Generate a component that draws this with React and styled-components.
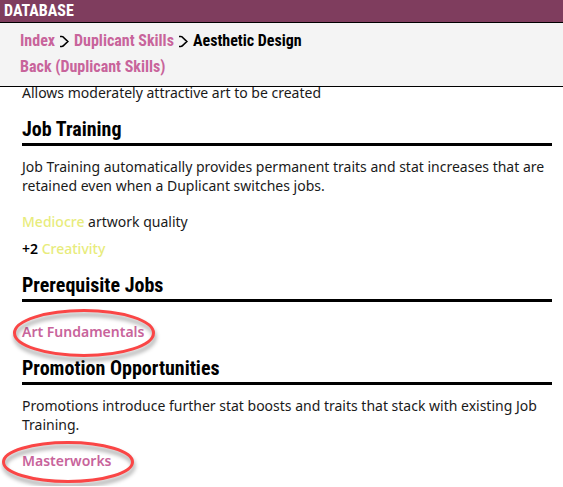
import React from "react";
import styled, { createGlobalStyle } from "styled-components";

const App = () => {
  return (
    <>
      <GlobalStyle />
      <Header>
        <TitleBar>DATABASE</TitleBar>
        <Nav aria-label="Breadcrumb">
          <Crumbs>
            <CrumbLink href="#index">Index</CrumbLink>
            <Arrow />
            <CrumbLink href="#skills">Duplicant Skills</CrumbLink>
            <Arrow />
            <span>Aesthetic Design</span>
          </Crumbs>
          <Crumbs>
            <CrumbLink href="#back">Back (Duplicant Skills)</CrumbLink>
          </Crumbs>
        </Nav>
      </Header>

      <Content>
        <Text>Allows moderately attractive art to be created</Text>

        <Heading>Job Training</Heading>
        <Text>
          Job Training automatically provides permanent traits and stat
          increases that are retained even when a Duplicant switches jobs.
        </Text>
        <Effects>
          <li>
            <Stat>Mediocre</Stat> artwork quality
          </li>
          <li>
            <b>+2</b> <Stat>Creativity</Stat>
          </li>
        </Effects>

        <Heading>Prerequisite Jobs</Heading>
        <JobRow $space={20}>
          <CircledLink href="#art-fundamentals" width={143} height={49}>
            Art Fundamentals
          </CircledLink>
        </JobRow>

        <Heading>Promotion Opportunities</Heading>
        <Text>
          Promotions introduce further stat boosts and traits that stack with
          existing Job Training.
        </Text>
        <JobRow $space={17}>
          <CircledLink href="#masterworks" width={133} height={43}>
            Masterworks
          </CircledLink>
        </JobRow>
      </Content>
    </>
  );
};

export default App;

const Arrow = () => (
  <ArrowIcon viewBox="0 0 9 13" aria-hidden="true">
    <path d="M0 1.5 H1.8 Q3.2 1.7 4.2 3 L7.8 6.5 L4.2 10 Q3.2 11.3 1.8 11.5 H0" />
  </ArrowIcon>
);

const CircledLink = ({ href, width, height, children }) => (
  <JobLink href={href}>
    {children}
    <Ring width={width} height={height} aria-hidden="true">
      <ellipse
        cx={width / 2}
        cy={height / 2}
        rx={width / 2 - 2}
        ry={height / 2 - 2}
      />
    </Ring>
  </JobLink>
);

const GlobalStyle = createGlobalStyle`
  body {
    margin: 0;
    background: #ffffff;
    color: #1a1a1a;
    font-family: "Noto Sans", sans-serif;
    font-size: 14px;
    line-height: 19px;
  }

  a {
    text-decoration: none;
  }

  b {
    color: #000000;
    font-weight: 600;
  }
`;

const displayFont = `"Roboto Condensed", "Liberation Sans Narrow", "Arial Narrow", sans-serif`;

const Header = styled.header`
  position: sticky;
  top: 0;
  z-index: 1;
  font-family: ${displayFont};
  font-weight: 700;
  border-bottom: 1px solid #000000;
`;

const TitleBar = styled.div`
  padding: 0 4px;
  background: #7f3d5e;
  border-bottom: 1px solid #000000;
  color: #ffffff;
  font-size: 16px;
  line-height: 22px;
`;

const Nav = styled.nav`
  padding: 5px 20px 6px;
  background: #f4f4f4;
  color: #000000;
  font-size: 16px;
  line-height: 26px;
`;

const Crumbs = styled.div`
  display: flex;
  align-items: center;
  gap: 5px;
`;

const CrumbLink = styled.a`
  color: #c8649b;
`;

const ArrowIcon = styled.svg`
  width: 9px;
  height: 13px;
  fill: none;
  stroke: #000000;
  stroke-width: 1.7;
`;

const Content = styled.main`
  margin-top: -4px;
  padding: 0 11px 16px 22px;
`;

const Text = styled.p`
  margin: 0;
`;

const Heading = styled.h2`
  margin: 13px 0 11px;
  border-bottom: 3px solid #000000;
  color: #000000;
  font-family: ${displayFont};
  font-size: 20px;
  font-weight: 700;
  line-height: 28px;
`;

const Effects = styled.ul`
  display: grid;
  gap: 8px;
  margin: 17px 0 13px;
  padding: 0;
  list-style: none;
`;

const Stat = styled.span`
  color: #e8ec7c;
  font-weight: 500;
`;

const JobRow = styled.div`
  display: flex;
  margin-top: ${({ $space }) => $space}px;
`;

const JobLink = styled.a`
  position: relative;
  color: #c8649b;
  font-weight: 600;
`;

const Ring = styled.svg`
  position: absolute;
  top: calc(50% + 1px);
  left: calc(50% + 1px);
  overflow: visible;
  transform: translate(-50%, -50%);
  fill: none;
  stroke: #fa4646;
  stroke-width: 3;
  filter: drop-shadow(1px 4px 2px rgba(0, 0, 0, 0.4));
`;
